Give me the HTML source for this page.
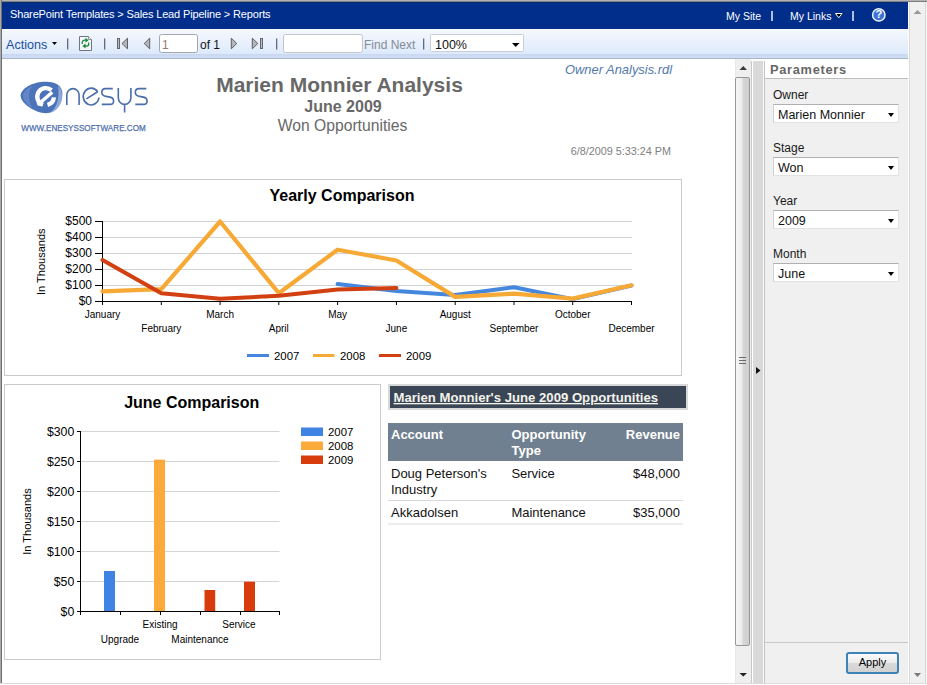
<!DOCTYPE html>
<html><head><meta charset="utf-8">
<style>
*{margin:0;padding:0;box-sizing:border-box}
html,body{width:927px;height:685px;overflow:hidden;background:#fff;font-family:"Liberation Sans",sans-serif}
.a{position:absolute;white-space:nowrap}
#frameT{left:0;top:0;width:927px;height:2px;background:linear-gradient(#b2b2b2 50%,#7b7e83 50%)}
#frameL{left:0;top:0;width:2px;height:683px;background:linear-gradient(90deg,#a9a9a9 50%,#6d6f72 50%)}
#frameB{left:0;top:683px;width:927px;height:1px;background:#dcdcdc}
#bar{left:2px;top:2px;width:906px;height:27px;background:#012d8b;box-shadow:inset 0 1px 0 #0a2a72}
#bar .t{color:#fff;font-size:11px;line-height:11px}
#tb{left:2px;top:29px;width:906px;height:29px;background:linear-gradient(#f5f9fe,#e8f0fc 50%,#d8e7fb)}
#tbline{left:2px;top:54px;width:906px;height:5px;background:linear-gradient(#c8d8f0,#d1ddf5 80%,#a9b5c9 80%)}

#bscroll{left:908px;top:2px;width:19px;height:681px;background:#f0f0f0;border-left:1px solid #fdfdfd;box-shadow:inset 1px 0 0 #dcdcdc,inset -1px 0 0 #f6f6f6,inset -2px 0 0 #d8d8d8}
#bscrollR{left:925px;top:2px;width:2px;height:681px;background:#c9c9c9}
#report{left:2px;top:59px;width:733px;height:625px;background:#fff}
#vs{left:735px;top:59px;width:16px;height:625px;background:#efefef;border-left:1px solid #e8e8e8}
#thumb{left:735px;top:77px;width:15px;height:569px;border:1px solid #979797;border-radius:2px;background:linear-gradient(90deg,#f6f6f6,#ececec 45%,#d6d6d6 55%,#cfcfcf)}
#split{left:751px;top:59px;width:14px;height:625px;background:linear-gradient(90deg,#c8c8c8 0,#c8c8c8 1px,#fff 1px,#fff 2px,#d9d9d9 2px,#d9d9d9 12px,#fafafa 12px,#fafafa 13px,#c3c3c3 13px);border-top:2px solid #fff}
#params{left:765px;top:59px;width:143px;height:625px;background:#f0f0f0}
#phead{left:765px;top:59px;width:143px;height:20px;background:#fff;border-bottom:1px solid #bdbdbd}
.lbl{position:absolute;font-size:12px;line-height:12px;color:#1a1a1a}
.sel{position:absolute;left:773px;width:126px;height:19px;background:#fff;border:1px solid #e2e2e2;border-top-color:#b0b0b0;border-left-color:#d0d0d0}
.sel span{position:absolute;left:4px;top:4px;font-size:12.5px;line-height:12px;color:#111}
.sel i{position:absolute;left:114px;top:8px;width:0;height:0;border-left:3.5px solid transparent;border-right:3.5px solid transparent;border-top:4px solid #000}
.box{position:absolute;border:1px solid #cfcfcf;background:#fff}
</style></head><body>
<div class="a" id="frameT"></div>
<div class="a" id="bar">
  <div class="a t" style="left:8px;top:7px;letter-spacing:-0.15px">SharePoint Templates &gt; Sales Lead Pipeline &gt; Reports</div>
  <div class="a t" style="left:724px;top:9px;font-size:10.5px">My Site</div>
  <div class="a" style="left:769px;top:9px;width:1.5px;height:10px;background:#aac0ea"></div>
  <div class="a t" style="left:788px;top:9px;font-size:10.5px">My Links</div>
  <div class="a" style="left:850px;top:9px;width:1.5px;height:10px;background:#aac0ea"></div>
</div>
<div class="a" id="frameL"></div>
<div class="a" id="tb"></div>
<div class="a" id="tbline"></div>
<div class="a" style="left:6px;top:39px;font-size:12.6px;line-height:12px;color:#21509e">Actions</div>
<svg class="a" style="left:0;top:0" width="927" height="60">
 <polygon points="52,42 57,42 54.5,45" fill="#000"/>
 <rect x="67" y="38.5" width="1.3" height="11" fill="#5d6a80"/>
 <rect x="104" y="38.5" width="1.3" height="11" fill="#5d6a80"/>
 <rect x="276" y="38.5" width="1.3" height="11" fill="#5d6a80"/>
 <rect x="423" y="38.5" width="1.3" height="11" fill="#5d6a80"/>
 <!-- refresh page icon -->
 <path d="M79.5 36.5 H88.5 L91.5 39.5 V50.5 H79.5 Z" fill="#f4f6f8" stroke="#6e7684" stroke-width="1"/>
 <path d="M88.5 36.5 V39.5 H91.5" fill="#fff" stroke="#8a909a" stroke-width="1"/>
 <path d="M82.3 44 V42 Q82.5 40.3 85 40.2 H86" fill="none" stroke="#1a8a3c" stroke-width="1.3"/>
 <polygon points="85.5,37.8 88.5,40.3 85.5,42.8" fill="#138a38"/>
 <path d="M88.7 42.5 V44.3 Q88.5 46 86 46.1 H85" fill="none" stroke="#1a8a3c" stroke-width="1.3"/>
 <polygon points="85.5,43.6 82.5,46.1 85.5,48.6" fill="#138a38"/>
 <!-- first -->
 <rect x="117.5" y="38.5" width="2" height="10" fill="#b9bcc0" stroke="#63666b" stroke-width="1"/>
 <polygon points="122,43.5 127.5,38.2 127.5,48.8" fill="#b3b6ba" stroke="#5c5f64" stroke-width="1" stroke-linejoin="round"/>
 <polygon points="144.2,43.5 149.7,38.2 149.7,48.8" fill="#b3b6ba" stroke="#5c5f64" stroke-width="1" stroke-linejoin="round"/>
 <polygon points="236.8,43.5 231.3,38.2 231.3,48.8" fill="#b3b6ba" stroke="#5c5f64" stroke-width="1" stroke-linejoin="round"/>
 <polygon points="257.8,43.5 252.3,38.2 252.3,48.8" fill="#b3b6ba" stroke="#5c5f64" stroke-width="1" stroke-linejoin="round"/>
 <rect x="260.5" y="38.5" width="2" height="10" fill="#b9bcc0" stroke="#63666b" stroke-width="1"/>
 <!-- inputs -->
 <rect x="159.5" y="34.5" width="38" height="18" rx="2" fill="#fff" stroke="#a4a8ad"/>
 <rect x="283.5" y="34.5" width="79" height="18" rx="2" fill="#fff" stroke="#c2c6cc"/>
 <rect x="430.5" y="34.5" width="93" height="17" rx="1" fill="#fff" stroke="#c9ced6"/>
 <polygon points="512,43 519.5,43 515.75,47" fill="#000"/>
 <!-- help icon -->
 <circle cx="878.8" cy="14.9" r="6.2" fill="#3d73d6" stroke="#eaf2ff" stroke-width="1.5"/>
 <polygon points="835.5,13.5 842,13.5 838.75,17.8" fill="#000" stroke="#fff" stroke-width="1"/>
</svg>
<div class="a" style="left:162px;top:39px;font-size:12px;line-height:12px;color:#8c7d70">1</div>
<div class="a" style="left:200px;top:39px;font-size:12px;line-height:12px;color:#151515">of 1</div>
<div class="a" style="left:364px;top:39px;font-size:12px;line-height:12px;color:#858b95">Find Next</div>
<div class="a" style="left:435px;top:39px;font-size:12.5px;line-height:12px;color:#111">100%</div>
<div class="a" style="left:875.5px;top:9px;font:bold 11px/11px 'Liberation Sans';color:#fff">?</div>

<div class="a" id="report"></div>
<!--REPORT-->
<svg class="a" style="left:0;top:0" width="735" height="685" font-family="Liberation Sans, sans-serif">
<g id="logo">
 <path d="M20.6 95 C21.5 88 33 81.8 46 81.8 C56 81.8 62.4 86 62.4 94 C62.4 104 56 113.2 46 113.2 C35 113.2 20 103 20.6 95 Z" fill="#4b73b9"/>
 <path d="M58 86 C62 89 63 96 61 103 C59 108 55 112 50 113 C56 108 60 100 58 86 Z" fill="#9fb7de" opacity="0.8"/>
 <path d="M23 95 C24 91 28 88 32 86 C28 92 28 100 33 109 C27 105 22.5 99 23 95 Z" fill="#6c8fcf" opacity="0.7"/>
  <path d="M51.5 90.2 A8.6 8.6 0 1 0 43 104.8" fill="none" stroke="#fff" stroke-width="4.3"/>
 <path d="M47.5 104.9 A8.6 8.6 0 0 0 53.9 97.4" fill="none" stroke="#fff" stroke-width="4.3"/>
 <path d="M37.6 105 L52.2 92.2" stroke="#fff" stroke-width="3.4"/>
<g fill="none" stroke="#4a6dab" stroke-width="1.6">
  <path d="M66.8 104.9 V94.8 A6.15 6.15 0 0 1 79.1 94.8 V104.9"/>
  <path d="M97.7 91.8 L86.4 98.9 M97.7 91.8 A7.9 8.4 0 1 0 99 97.5"/>
  <path d="M112.8 88.6 H105.5 Q101.8 88.6 101.8 92.3 Q101.8 95.8 106 96.4 L110 97.1 Q113.6 97.7 113.6 101 Q113.6 104.4 110 104.4 H101.8"/>
  <path d="M118.3 88.1 V97.8 A6.3 6.6 0 0 0 130.9 97.8 V88.1 M124.6 104.4 V112.6"/>
  <path d="M146.3 88.6 H139 Q135.3 88.6 135.3 92.3 Q135.3 95.8 139.5 96.4 L143.5 97.1 Q147.1 97.7 147.1 101 Q147.1 104.4 143.5 104.4 H135.3"/>
 </g>
 <text x="21.3" y="130.6" font-size="8.6" fill="#5070ad" stroke="#5070ad" stroke-width="0.25" textLength="124.4" lengthAdjust="spacingAndGlyphs">WWW.ENESYSSOFTWARE.COM</text>
</g>
<text x="339.5" y="92.4" font-size="21" font-weight="bold" fill="#686868" text-anchor="middle">Marien Monnier Analysis</text>
<text x="343" y="112" font-size="16" font-weight="bold" fill="#686868" text-anchor="middle">June 2009</text>
<text x="342.5" y="131" font-size="15.7" fill="#686868" text-anchor="middle">Won Opportunities</text>
<text x="672" y="74" font-size="12.9" font-style="italic" fill="#5279aa" text-anchor="end">Owner Analysis.rdl</text>
<text x="671" y="155" font-size="10.8" fill="#808080" text-anchor="end">6/8/2009 5:33:24 PM</text>
<rect x="4.5" y="179.5" width="677" height="196" fill="#fff" stroke="#cacaca"/>
<text x="342" y="200.5" font-size="16" font-weight="bold" fill="#000" text-anchor="middle">Yearly Comparison</text>
<line x1="103" y1="221.5" x2="632" y2="221.5" stroke="#d4d4d4"/>
<line x1="103" y1="237.5" x2="632" y2="237.5" stroke="#d4d4d4"/>
<line x1="103" y1="253.5" x2="632" y2="253.5" stroke="#d4d4d4"/>
<line x1="103" y1="269.5" x2="632" y2="269.5" stroke="#d4d4d4"/>
<line x1="103" y1="285.5" x2="632" y2="285.5" stroke="#d4d4d4"/>
<g stroke="#000" stroke-width="1">
<line x1="102.5" y1="221" x2="102.5" y2="305"/>
<line x1="95" y1="301.5" x2="632" y2="301.5"/>
<line x1="95" y1="221.5" x2="102" y2="221.5"/>
<line x1="95" y1="237.5" x2="102" y2="237.5"/>
<line x1="95" y1="253.5" x2="102" y2="253.5"/>
<line x1="95" y1="269.5" x2="102" y2="269.5"/>
<line x1="95" y1="285.5" x2="102" y2="285.5"/>
<line x1="102.5" y1="301" x2="102.5" y2="305"/>
<line x1="161.3" y1="301" x2="161.3" y2="305"/>
<line x1="220.1" y1="301" x2="220.1" y2="305"/>
<line x1="278.8" y1="301" x2="278.8" y2="305"/>
<line x1="337.6" y1="301" x2="337.6" y2="305"/>
<line x1="396.4" y1="301" x2="396.4" y2="305"/>
<line x1="455.2" y1="301" x2="455.2" y2="305"/>
<line x1="514.0" y1="301" x2="514.0" y2="305"/>
<line x1="572.7" y1="301" x2="572.7" y2="305"/>
<line x1="631.5" y1="301" x2="631.5" y2="305"/>
</g>
<text x="92" y="225.2" font-size="12" fill="#000" text-anchor="end">$500</text>
<text x="92" y="241.2" font-size="12" fill="#000" text-anchor="end">$400</text>
<text x="92" y="257.2" font-size="12" fill="#000" text-anchor="end">$300</text>
<text x="92" y="273.2" font-size="12" fill="#000" text-anchor="end">$200</text>
<text x="92" y="289.2" font-size="12" fill="#000" text-anchor="end">$100</text>
<text x="92" y="305.2" font-size="12" fill="#000" text-anchor="end">$0</text>
<text x="102.5" y="317.5" font-size="10" fill="#000" text-anchor="middle">January</text>
<text x="161.3" y="332" font-size="10" fill="#000" text-anchor="middle">February</text>
<text x="220.1" y="317.5" font-size="10" fill="#000" text-anchor="middle">March</text>
<text x="278.8" y="332" font-size="10" fill="#000" text-anchor="middle">April</text>
<text x="337.6" y="317.5" font-size="10" fill="#000" text-anchor="middle">May</text>
<text x="396.4" y="332" font-size="10" fill="#000" text-anchor="middle">June</text>
<text x="455.2" y="317.5" font-size="10" fill="#000" text-anchor="middle">August</text>
<text x="514.0" y="332" font-size="10" fill="#000" text-anchor="middle">September</text>
<text x="572.7" y="317.5" font-size="10" fill="#000" text-anchor="middle">October</text>
<text x="631.5" y="332" font-size="10" fill="#000" text-anchor="middle">December</text>
<text transform="translate(45.2 261.7) rotate(-90)" font-size="11" fill="#000" text-anchor="middle">In Thousands</text>
<polyline points="337.6,284.1 396.4,290.9 455.2,295.1 514.0,287.3 572.7,299.1 631.5,285.5" fill="none" stroke="#4587dd" stroke-width="4" stroke-linejoin="round" stroke-linecap="round"/>
<polyline points="102.5,291.3 161.3,289.2 220.1,221.5 278.8,293.2 337.6,249.7 396.4,260.5 455.2,296.9 514.0,293.7 572.7,298.6 631.5,285.3" fill="none" stroke="#f7a935" stroke-width="4.2" stroke-linejoin="round" stroke-linecap="round"/>
<polyline points="102.5,260.1 161.3,293.2 220.1,298.8 278.8,295.7 337.6,289.5 396.4,288.1" fill="none" stroke="#d23f10" stroke-width="4" stroke-linejoin="round" stroke-linecap="round"/>
<line x1="247" y1="355.5" x2="269" y2="355.5" stroke="#4587dd" stroke-width="3"/>
<text x="274" y="360" font-size="11.4" fill="#000">2007</text>
<line x1="313" y1="355.5" x2="334.5" y2="355.5" stroke="#f7a935" stroke-width="3"/>
<text x="340" y="360" font-size="11.4" fill="#000">2008</text>
<line x1="379" y1="355.5" x2="401" y2="355.5" stroke="#d23f10" stroke-width="3"/>
<text x="406" y="360" font-size="11.4" fill="#000">2009</text>
<rect x="4.5" y="384.5" width="376" height="275" fill="#fff" stroke="#cacaca"/>
<text x="191.7" y="408.3" font-size="16" font-weight="bold" fill="#000" text-anchor="middle">June Comparison</text>
<line x1="81" y1="431.5" x2="279.5" y2="431.5" stroke="#d4d4d4"/>
<line x1="81" y1="461.5" x2="279.5" y2="461.5" stroke="#d4d4d4"/>
<line x1="81" y1="491.5" x2="279.5" y2="491.5" stroke="#d4d4d4"/>
<line x1="81" y1="521.5" x2="279.5" y2="521.5" stroke="#d4d4d4"/>
<line x1="81" y1="551.5" x2="279.5" y2="551.5" stroke="#d4d4d4"/>
<line x1="81" y1="581.5" x2="279.5" y2="581.5" stroke="#d4d4d4"/>
<rect x="104" y="571" width="11" height="40.5" fill="#3f84e3"/>
<rect x="154" y="459.6" width="11" height="151.9" fill="#fdaa3c"/>
<rect x="204.5" y="590" width="10.7" height="21.5" fill="#d93c0c"/>
<rect x="244" y="581.7" width="11" height="29.8" fill="#d93c0c"/>
<g stroke="#000" stroke-width="1">
<line x1="80.5" y1="431" x2="80.5" y2="615"/>
<line x1="77" y1="611.5" x2="280" y2="611.5"/>
<line x1="77" y1="431.5" x2="80" y2="431.5"/>
<line x1="77" y1="461.5" x2="80" y2="461.5"/>
<line x1="77" y1="491.5" x2="80" y2="491.5"/>
<line x1="77" y1="521.5" x2="80" y2="521.5"/>
<line x1="77" y1="551.5" x2="80" y2="551.5"/>
<line x1="77" y1="581.5" x2="80" y2="581.5"/>
<line x1="120.5" y1="611" x2="120.5" y2="615"/>
<line x1="160.5" y1="611" x2="160.5" y2="615"/>
<line x1="200.5" y1="611" x2="200.5" y2="615"/>
<line x1="240.5" y1="611" x2="240.5" y2="615"/>
<line x1="279.5" y1="611" x2="279.5" y2="615"/>
</g>
<text x="74.3" y="435.5" font-size="12.3" fill="#000" text-anchor="end">$300</text>
<text x="74.3" y="465.5" font-size="12.3" fill="#000" text-anchor="end">$250</text>
<text x="74.3" y="495.5" font-size="12.3" fill="#000" text-anchor="end">$200</text>
<text x="74.3" y="525.5" font-size="12.3" fill="#000" text-anchor="end">$150</text>
<text x="74.3" y="555.5" font-size="12.3" fill="#000" text-anchor="end">$100</text>
<text x="74.3" y="585.5" font-size="12.3" fill="#000" text-anchor="end">$50</text>
<text x="74.3" y="615.5" font-size="12.3" fill="#000" text-anchor="end">$0</text>
<text x="160" y="627.5" font-size="10" fill="#000" text-anchor="middle">Existing</text>
<text x="239" y="627.5" font-size="10" fill="#000" text-anchor="middle">Service</text>
<text x="120" y="643" font-size="10" fill="#000" text-anchor="middle">Upgrade</text>
<text x="200" y="643" font-size="10" fill="#000" text-anchor="middle">Maintenance</text>
<text transform="translate(31.1 521.5) rotate(-90)" font-size="11" fill="#000" text-anchor="middle">In Thousands</text>
<rect x="301" y="427.5" width="22" height="8.5" fill="#3f84e3"/>
<text x="328" y="436.3" font-size="11.4" fill="#000">2007</text>
<rect x="301" y="441.5" width="22" height="8.5" fill="#fdaa3c"/>
<text x="328" y="450.3" font-size="11.4" fill="#000">2008</text>
<rect x="301" y="455.5" width="22" height="8.5" fill="#d93c0c"/>
<text x="328" y="464.3" font-size="11.4" fill="#000">2009</text>
<rect x="388" y="384" width="300" height="26" fill="#d9d9d9"/>
<rect x="390" y="386" width="296" height="22" fill="#3a4556"/>
<text x="393.5" y="402" font-size="13.15" font-weight="bold" fill="#f3f3ea" text-decoration="underline">Marien Monnier's June 2009 Opportunities</text>
<rect x="388" y="423" width="295" height="38" fill="#708090"/>
<g font-size="13" font-weight="bold" fill="#fff">
<text x="391" y="438.7">Account</text><text x="511.5" y="438.7">Opportunity</text><text x="511.5" y="455">Type</text><text x="680" y="438.7" text-anchor="end">Revenue</text>
</g>
<g font-size="13" fill="#111">
<text x="391" y="478.2">Doug Peterson's</text><text x="391" y="493.5">Industry</text><text x="511.4" y="478.2">Service</text><text x="680" y="478.2" text-anchor="end">$48,000</text>
<text x="391" y="516.8">Akkadolsen</text><text x="511.4" y="516.8">Maintenance</text><text x="680" y="516.8" text-anchor="end">$35,000</text>
</g>
<rect x="388" y="500" width="295" height="1" fill="#dadada"/>
<rect x="388" y="523.5" width="295" height="1" fill="#dadada"/>
</svg>
<!--/REPORT-->
<div class="a" id="vs"></div>
<div class="a" id="thumb"></div>
<div class="a" id="split"></div>
<div class="a" id="params"></div>
<div class="a" id="phead"></div>
<div class="a" id="bscroll"></div>

<div class="a" style="left:770px;top:63.5px;font:bold 12.8px/12px 'Liberation Sans';letter-spacing:0.7px;color:#666">Parameters</div>
<div class="lbl" style="left:773px;top:89px">Owner</div>
<div class="sel" style="top:104px"><span>Marien Monnier</span><i></i></div>
<div class="lbl" style="left:773px;top:142px">Stage</div>
<div class="sel" style="top:157px"><span>Won</span><i></i></div>
<div class="lbl" style="left:773px;top:195px">Year</div>
<div class="sel" style="top:210px"><span>2009</span><i></i></div>
<div class="lbl" style="left:773px;top:248px">Month</div>
<div class="sel" style="top:263px"><span>June</span><i></i></div>
<div class="a" style="left:765px;top:642px;width:143px;height:1px;background:#c8c8c8"></div>
<div class="a" id="apply" style="left:846px;top:652px;width:53px;height:22px;border:2px solid #3d83b8;border-radius:3px;background:linear-gradient(#fafafa,#ececec 50%,#d9d9d9 52%,#d2d2d2);font-size:11px;line-height:17px;text-align:center;color:#000">Apply</div>
<svg class="a" style="left:0;top:0" width="927" height="685">
 <polygon points="739.5,70 743.25,66 747,70" fill="#3a3a3a"/>
 <polygon points="739.5,673 747,673 743.25,676.5" fill="#222"/>
 <rect x="739" y="357" width="7" height="1" fill="#6a6a6a"/>
 <rect x="739" y="360" width="7" height="1" fill="#6a6a6a"/>
 <rect x="739" y="363" width="7" height="1" fill="#6a6a6a"/>
 <polygon points="756,367 760.5,370.5 756,374" fill="#111"/>
 <polygon points="913.5,14 917.5,10 921.5,14" fill="#9a9a9a"/>
 <polygon points="914,673 921,673 917.5,677" fill="#7a7a7a"/>
</svg>
<div class="a" id="frameB"></div>
</body></html>
